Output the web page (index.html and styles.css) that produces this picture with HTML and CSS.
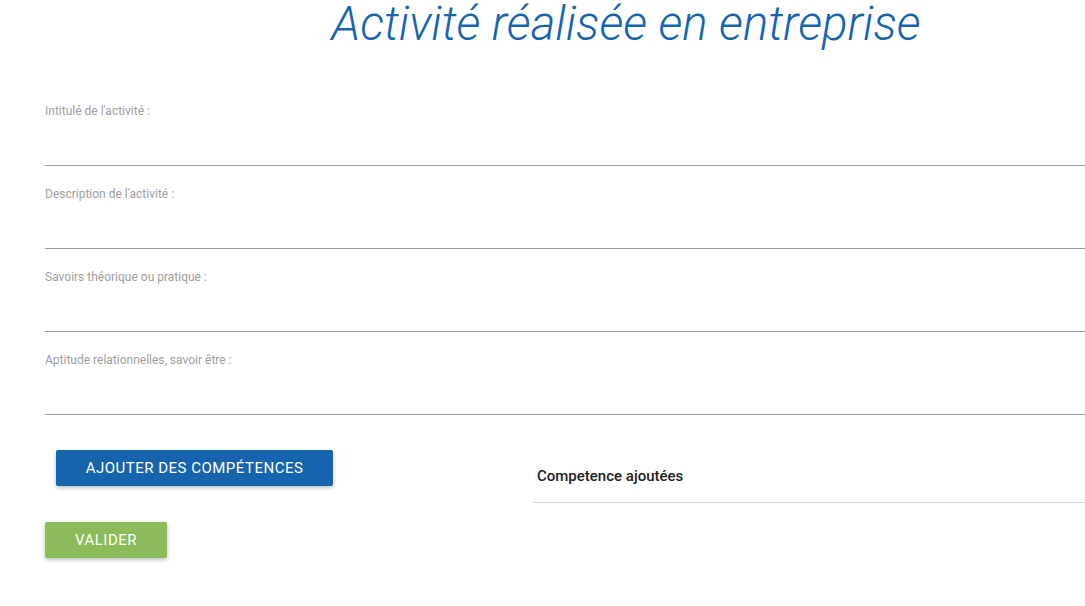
FILE: index.html
```html
<!DOCTYPE html>
<html lang="fr">
<head>
<meta charset="utf-8">
<title>Activité réalisée en entreprise</title>
<link rel="stylesheet" href="styles.css">
</head>
<body>
<div class="page">
  <h1 class="title">Activité réalisée en entreprise</h1>
  <form class="form">
    <div class="field">
      <label class="label">Intitulé de l'activité :</label>
      <div class="input"></div>
    </div>
    <div class="field">
      <label class="label">Description de l'activité :</label>
      <div class="input"></div>
    </div>
    <div class="field">
      <label class="label">Savoirs théorique ou pratique :</label>
      <div class="input"></div>
    </div>
    <div class="field">
      <label class="label">Aptitude relationnelles, savoir être :</label>
      <div class="input"></div>
    </div>
    <div class="row">
      <div class="left">
        <button type="button" class="btn btn-blue">Ajouter des compétences</button>
        <button type="button" class="btn btn-green">Valider</button>
      </div>
      <div class="right">
        <div class="added">Competence ajoutées</div>
      </div>
    </div>
  </form>
</div>
</body>
</html>
```
FILE: styles.css
```css
html, body {
  margin: 0;
  padding: 0;
  overflow: hidden;
  background: #fff;
}
body {
  font-family: Roboto, "Liberation Sans", sans-serif;
  width: 1085px;
  height: 606px;
}
.page {
  padding-left: 45px;
  width: 1040px;
}
.title {
  margin: 0;
  padding-left: 122px;
  height: 60px;
  font-size: 47.5px;
  line-height: 48px;
  font-style: italic;
  font-weight: 300;
  color: #1764ae;
  text-align: center;
  white-space: nowrap;
}
.form {
  padding-top: 44px;
}
.field {
  display: flex;
  flex-direction: column;
  height: 61px;
  margin-bottom: 21px;
  border-bottom: 1px solid #9e9e9e;
  width: 1040px;
}
.label {
  font-size: 12px;
  color: #9e9e9e;
  line-height: 14px;
}
.row {
  display: flex;
  padding-top: 14px;
}
.left {
  width: 487px;
  display: flex;
  flex-direction: column;
  align-items: flex-start;
  gap: 36px;
}
.btn {
  border: none;
  border-radius: 2px;
  height: 36px;
  font-family: Roboto, "Liberation Sans", sans-serif;
  font-size: 15px;
  font-weight: 400;
  text-transform: uppercase;
  color: #fff;
  letter-spacing: 0.5px;
  box-shadow: 0 2px 4px rgba(0,0,0,0.25);
  padding: 0;
  text-align: center;
}
.btn-blue {
  background: #1764ae;
  margin-left: 11px;
  width: 277px;
}
.btn-green {
  background: #8bbb5a;
  width: 122px;
}
.right {
  width: 553px;
}
.added {
  margin-top: 17px;
  padding: 0 5px 17px;
  font-size: 15px;
  font-weight: 500;
  color: #222;
  border-bottom: 1px solid #dcdcdc;
}
```
